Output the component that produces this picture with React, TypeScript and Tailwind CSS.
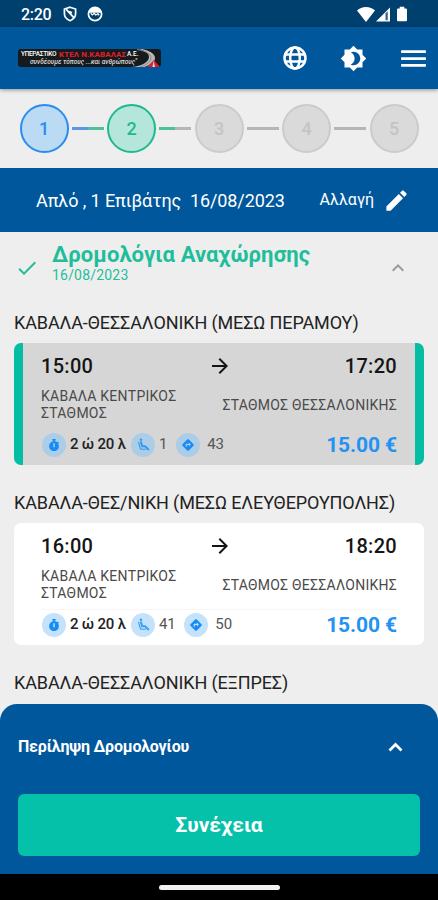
// Trip selection screen of the bus booking app (departure step).
// Status bar, app bar, stepper, search summary, list of trips and the bottom sheet.

import {
  MdArrowForward,
  MdBrightness4,
  MdCheck,
  MdDirections,
  MdEdit,
  MdKeyboardArrowUp,
  MdMenu,
} from "react-icons/md";
import { FaStopwatch } from "react-icons/fa";
import type { ReactNode } from "react";

interface Trip {
  title: string;
  departs: string;
  arrives: string;
  seats: string;
  distance: string;
  selected: boolean;
}

const TRIPS: Trip[] = [
  {
    title: "ΚΑΒΑΛΑ-ΘΕΣΣΑΛΟΝΙΚΗ (ΜΕΣΩ ΠΕΡΑΜΟΥ)",
    departs: "15:00",
    arrives: "17:20",
    seats: "1",
    distance: "43",
    selected: true,
  },
  {
    title: "ΚΑΒΑΛΑ-ΘΕΣ/ΝΙΚΗ (ΜΕΣΩ ΕΛΕΥΘΕΡΟΥΠΟΛΗΣ)",
    departs: "16:00",
    arrives: "18:20",
    seats: "41",
    distance: "50",
    selected: false,
  },
];

function StatusBar() {
  return (
    <div className="h-[27px] shrink-0 bg-[#00406f] flex items-center text-white pt-px pl-[21px] pr-[31px]">
      <span className="text-[16px] leading-none font-medium w-[42px] pt-px tracking-[-0.3px]">2:20</span>
      <svg width="14" height="16" viewBox="0 0 14 16" fill="none" stroke="white" strokeWidth="1.7">
        <path d="M7 1.2 12.6 3v4.6c0 3.4-2.4 6-5.6 7.1-3.2-1.1-5.6-3.7-5.6-7.1V3z" />
        <path d="m3 3.2 8 8.6M6 5.6l3 1.2" />
      </svg>
      <svg width="16" height="16" viewBox="0 0 16 16" fill="none" className="ml-[10px]">
        <circle cx="8" cy="8" r="6.6" stroke="white" strokeWidth="1.7" />
        <path d="M1.600 6.800C2.200 3.600 5 1.6 8 1.6s5.800 2 6.400 5.200z" fill="white" />
        <path d="m3.8 7 1.4 2 2-1.6 1.6 1.6 2.4-1.4" stroke="white" strokeWidth="1.2" />
        <circle cx="11.4" cy="8.6" r="1" fill="white" />
      </svg>
      <div className="flex-1" />
      <svg width="18" height="15" viewBox="0 0 18 15" fill="white">
        <path d="M0 3.6C2.4 1.4 5.4 0 9 0s6.600 1.400 9 3.600L9 15z" />
      </svg>
      <svg width="14" height="15" viewBox="0 0 15 15" className="ml-px">
        <path d="M15 0v15H0z" fill="white" />
        <path d="M10.200 6.300 12.600 4v9.600h-2.400z" fill="#33618a" />
      </svg>
      <svg width="10" height="16" viewBox="0 0 11 16" fill="white" className="ml-[7px]">
        <path d="M3 0h5v2h1.600c.8 0 1.400.6 1.400 1.400v11.200c0 .8-.6 1.400-1.400 1.400H1.400C.6 16 0 15.400 0 14.600V3.400C0 2.600.6 2 1.400 2H3z" />
      </svg>
    </div>
  );
}

function Logo() {
  return (
    <div className="relative w-[143px] h-[18px] rounded-[3px] bg-[#171a1c] overflow-hidden pl-[3px] text-white whitespace-nowrap">
      <div className="flex items-center h-[10px] pt-px">
        <span className="text-[6.500px] leading-none font-medium w-[38px] tracking-[-0.3px]">ΥΠΕΡΑΣΤΙΚΟ</span>
        <span className="text-[8px] leading-none font-bold text-[#e0202b] w-[68px] tracking-[0.1px]">ΚΤΕΛ Ν.ΚΑΒΑΛΑΣ</span>
        <span className="text-[6.500px] leading-none font-medium">Α.Ε.</span>
      </div>
      <div className="text-[6.500px] leading-[7px] italic font-medium pl-[9px] text-[#ddd]">συνδέουμε τόπους ...και ανθρώπους"</div>
      {/* road swoosh */}
      <svg width="32" height="20" viewBox="0 0 32 20" className="absolute right-0 -top-px">
        <path d="M3 0c10 1 17 4 17 9 0 5-7 9-17 10l11 .4c7-2 12-5 12-9.400C26 4 15 0 3 0z" fill="#b9b9bc" />
        <path d="M8 1.500c9 1.500 14 4.500 14 8s-4 7.500-11 9.500" fill="none" stroke="#85888c" strokeWidth="1" />
        <path d="M25 12l6 7H18z" fill="#d8202c" />
        <path d="m24.600 13-1.200 6h2.600z" fill="#ddd" />
      </svg>
    </div>
  );
}

function GlobeIcon() {
  return (
    <svg width="24" height="24" viewBox="0 0 24 24" fill="none" stroke="white" strokeWidth="2.500">
      <circle cx="12" cy="12" r="10.500" />
      <ellipse cx="12" cy="12" rx="4.800" ry="10.500" />
      <path d="M2 8.500h20M2 15.500h20" />
    </svg>
  );
}

// Passenger in a reclined seat
function SeatIcon() {
  return (
    <svg width="13" height="13" viewBox="0 0 13 13" fill="none" stroke="currentColor" strokeLinecap="round" className="opacity-80">
      <circle cx="4" cy="1.800" r="1.200" fill="currentColor" stroke="none" />
      <path d="M4 4.200 5.200 8.200H8l3.400 3.200" strokeWidth="2" />
      <path d="M1.600 4.200 3.200 10c.2.700.700 1.200 1.500 1.200h3.800" strokeWidth="1.100" />
    </svg>
  );
}

function AppBar() {
  return (
    <header className="relative z-10 h-[62px] shrink-0 bg-[#01579b] flex items-center text-white pl-[18px] pr-[8px] shadow-[0_1px_4px_rgba(0,0,0,0.4)]">
      <Logo />
      <div className="flex-1" />
      <GlobeIcon />
      <MdBrightness4 className="w-[27px] h-[27px] ml-[33px]" />
      <MdMenu className="w-[33px] h-[33px] ml-[30px]" />
    </header>
  );
}

const STEPS = [
  { circle: "border-[#2b8cf0] bg-[#bbdaf3] text-[#2b8cf0]", line: "from-[#5b95e6] to-[#4cc09a]" },
  { circle: "border-[#1fb890] bg-[#b5e6db] text-[#1fb890]", line: "from-[#4cc09a] to-[#b5b5b5]" },
  { circle: "border-[#cbcbcb] bg-[#dadada] text-[#c4c4c4]", line: "from-[#b5b5b5] to-[#b5b5b5]" },
  { circle: "border-[#cbcbcb] bg-[#dadada] text-[#c4c4c4]", line: "from-[#b5b5b5] to-[#b5b5b5]" },
  { circle: "border-[#cbcbcb] bg-[#dadada] text-[#c4c4c4]", line: "" },
];

function Stepper() {
  return (
    <div className="h-[79px] shrink-0 flex items-center justify-between px-[19.500px]">
      {STEPS.map((step, i) => (
        <div key={i} className="contents">
          <div className={`size-[49px] rounded-full border-2 flex items-center justify-center text-[18px] font-medium ${step.circle}`}>
            {i + 1}
          </div>
          {step.line && <div className={`w-[32px] h-[3px] bg-linear-to-r from-50% to-50% ${step.line}`} />}
        </div>
      ))}
    </div>
  );
}

function SearchSummary() {
  return (
    <div className="h-[64px] shrink-0 bg-[#01579b] text-white flex items-center pl-[36px] pr-[28px]">
      <span className="text-[18px] tracking-[-0.09px] whitespace-pre">Απλό , 1 Επιβάτης  16/08/2023</span>
      <div className="flex-1" />
      <span className="text-[16px]">Αλλαγή</span>
      <MdEdit className="w-[27px] h-[27px] ml-[9px]" />
    </div>
  );
}

function Badge({ selected, children }: { selected: boolean; children: ReactNode }) {
  return (
    <span className={`size-[24px] shrink-0 rounded-full flex items-center justify-center text-[#168df5] ${selected ? "bg-[#accde8]" : "bg-[#c4e2fb]"}`}>
      {children}
    </span>
  );
}

function TripCard({ trip }: { trip: Trip }) {
  return (
    <section className="pb-[26px]">
      <h3 className="h-[32px] pt-px text-[18px] leading-[22px] text-[#222] whitespace-nowrap tracking-[-0.12px]">{trip.title}</h3>
      <div
        className={`h-[122px] rounded-[7px] flex flex-col overflow-hidden ${
          trip.selected ? "bg-[#d6d6d6] border-x-[9px] border-[#05bda3] px-[18px]" : "bg-white px-[27px]"
        }`}
      >
        <div className="flex items-center justify-between h-[46px] text-[20px] font-medium text-[#151515] tracking-[0.3px]">
          <span className="w-[80px]">{trip.departs}</span>
          <MdArrowForward className="w-[24px] h-[24px] ml-[2px]" />
          <span className="w-[80px] text-right">{trip.arrives}</span>
        </div>
        <div className="flex items-center justify-between h-[32px] text-[14px] leading-[17px] text-[#4a4a4a] tracking-[0.25px]">
          <span className="w-[150px]">ΚΑΒΑΛΑ ΚΕΝΤΡΙΚΟΣ ΣΤΑΘΜΟΣ</span>
          <span>ΣΤΑΘΜΟΣ ΘΕΣΣΑΛΟΝΙΚΗΣ</span>
        </div>
        <div className={`flex items-center h-[30px] mt-[8px] border-t text-[#555] ${trip.selected ? "border-transparent" : "border-[#f6f6f6]"}`}>
          <div className="flex flex-1 items-center pl-px text-[15px] tracking-[-0.3px]">
            <Badge selected={trip.selected}>
              <FaStopwatch className="w-[12px] h-[12px]" />
            </Badge>
            <span className="ml-[4px] w-[61px] font-medium text-[#222] whitespace-nowrap tracking-[-0.2px]">2 ώ 20 λ</span>
            <Badge selected={trip.selected}>
              <SeatIcon />
            </Badge>
            <span className="ml-[4px] mr-[9px]">{trip.seats}</span>
            <Badge selected={trip.selected}>
              <MdDirections className="w-[14px] h-[14px]" />
            </Badge>
            <span className="ml-[7px] tracking-normal">{trip.distance}</span>
          </div>
          <span className="pt-[3px] text-[21px] font-bold text-[#2492f2] tracking-[-0.1px]">15.00 €</span>
        </div>
      </div>
    </section>
  );
}

function TripList() {
  return (
    <main className="flex-1 min-h-0 overflow-hidden px-[14px]">
      <div className="h-[79px] flex pt-[11px] pl-px pr-[14px] text-[#1fbe9b]">
        <MdCheck className="w-[24px] h-[24px] mt-[13px]" />
        <div className="ml-[13px] flex-1">
          <h2 className="text-[22px] leading-[24px] font-bold whitespace-nowrap tracking-[0.1px]">Δρομολόγια Αναχώρησης</h2>
          <p className="text-[14px] leading-[16px] tracking-[0.2px]">16/08/2023</p>
        </div>
        <MdKeyboardArrowUp className="w-[24px] h-[24px] mt-[13px] text-[#999]" />
      </div>
      {TRIPS.map((trip) => (
        <TripCard key={trip.departs} trip={trip} />
      ))}
      <h3 className="pt-px text-[18px] leading-[22px] text-[#222] whitespace-nowrap tracking-[-0.12px]">ΚΑΒΑΛΑ-ΘΕΣΣΑΛΟΝΙΚΗ (ΕΞΠΡΕΣ)</h3>
    </main>
  );
}

function BottomSheet() {
  return (
    <footer className="h-[170px] shrink-0 rounded-t-[17px] bg-[#01579b] text-white px-[18px]">
      <div className="h-[90px] flex items-center justify-between pr-px pb-[4px]">
        <span className="text-[16px] font-bold tracking-[-0.2px]">Περίληψη Δρομολογίου</span>
        <svg width="15" height="10" viewBox="0 0 15 10" fill="none" stroke="white" strokeWidth="2.800" className="mr-[16px]">
          <path d="m1.500 8.500 6-6 6 6" />
        </svg>
      </div>
      <button className="w-full h-[62px] rounded-[6px] bg-[#05c1a9] text-[21px] font-bold pt-px">Συνέχεια</button>
    </footer>
  );
}

export default function App() {
  return (
    <div className="w-[438px] h-[900px] flex flex-col overflow-hidden bg-[#eeeeee] font-[Roboto,sans-serif]">
      <StatusBar />
      <AppBar />
      <Stepper />
      <SearchSummary />
      <TripList />
      <BottomSheet />
      <div className="h-[26px] shrink-0 bg-black flex justify-center">
        <div className="w-[121px] h-[5px] mt-[11px] rounded-full bg-[#f2f2f2]" />
      </div>
    </div>
  );
}
